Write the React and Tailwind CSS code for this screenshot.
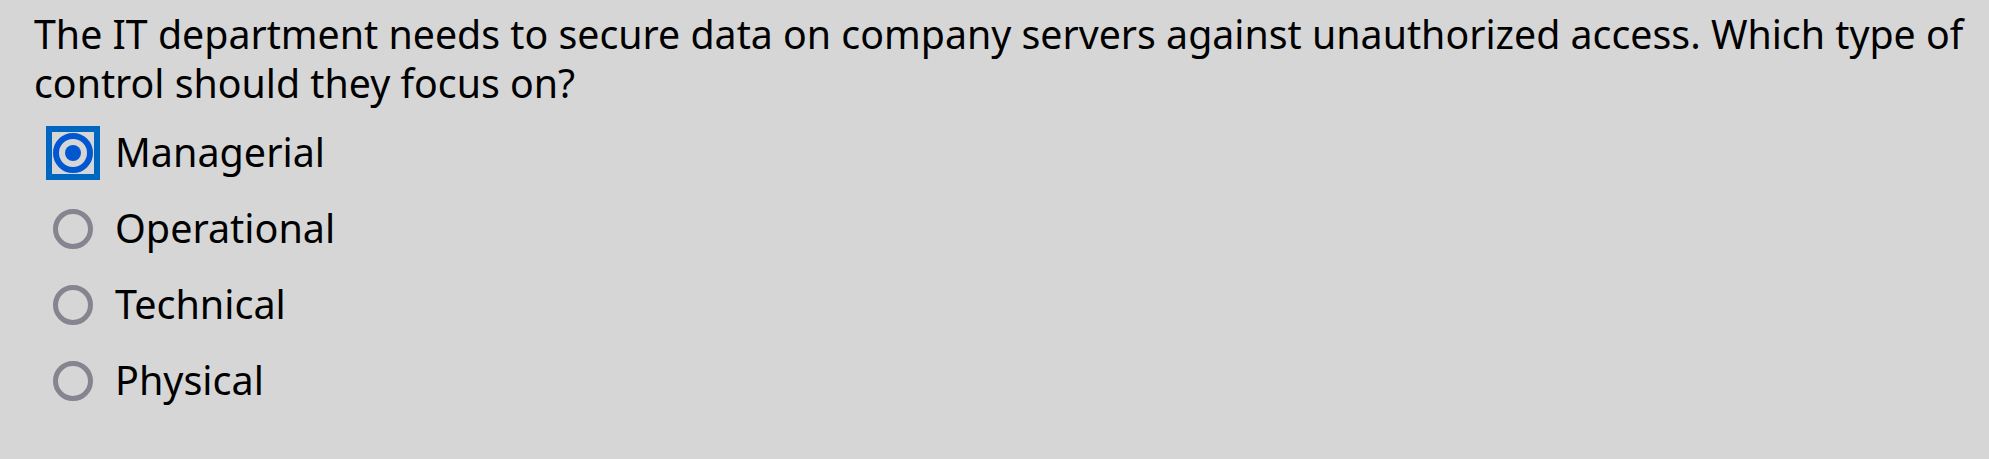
const options = ["Managerial", "Operational", "Technical", "Physical"];

function Radio({ checked }) {
  if (checked) {
    return (
      <span className="flex h-[54px] w-[54px] shrink-0 items-center justify-center border-[6px] border-[#0067c0]">
        <span className="flex h-[40px] w-[40px] items-center justify-center rounded-full border-[6px] border-[#0156d2]">
          <span className="h-[16px] w-[16px] rounded-full bg-[#0156d2]" />
        </span>
      </span>
    );
  }
  return (
    <span className="flex h-[54px] w-[54px] shrink-0 items-center justify-center">
      <span className="h-[40px] w-[40px] rounded-full border-[5px] border-[#85848f]" />
    </span>
  );
}

export default function App() {
  return (
    <div
      className="h-screen w-full bg-[#d6d6d6] pl-[34px] pt-[10px] text-black"
      style={{ fontFamily: '"Noto Sans", "Open Sans", sans-serif' }}
    >
      <p className="text-[39.3px] leading-[49px]">
        The IT department needs to secure data on company servers against unauthorized access. Which type of control
        should they focus on?
      </p>
      <div className="mt-[18px] flex flex-col gap-[22px] pl-[12px]">
        {options.map((opt, i) => (
          <label key={opt} className="flex items-center gap-[15px] text-[39.5px] leading-none">
            <Radio checked={i === 0} />
            <span>{opt}</span>
          </label>
        ))}
      </div>
    </div>
  );
}
